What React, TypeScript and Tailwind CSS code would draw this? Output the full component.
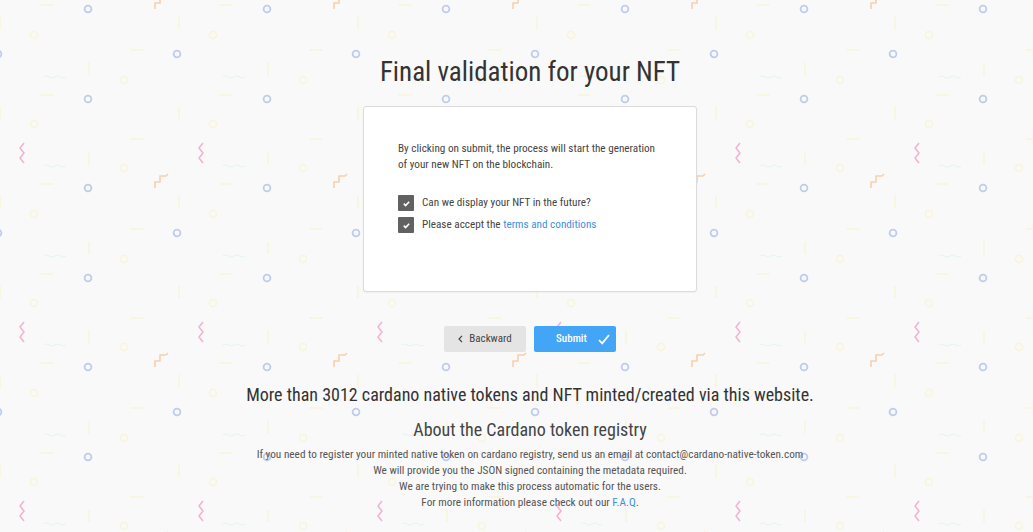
import React from 'react';

// Confetti-like tile used behind the whole page
function PatternBackground() {
  return (
    <svg className="pointer-events-none absolute inset-0 h-full w-full" aria-hidden="true">
      <defs>
        <pattern id="confetti" width="179" height="179" patternUnits="userSpaceOnUse">
          {/* blue rings */}
          <g fill="none" stroke="#bfcbef" strokeWidth="1.8">
            <circle cx="88" cy="9" r="3.4" />
            <circle cx="88" cy="99" r="3.4" />
            <circle cx="88" cy="188" r="3.4" />
            <circle cx="177" cy="54" r="3.4" />
            <circle cx="-2" cy="54" r="3.4" />
          </g>
          {/* faint yellow rings and dashes */}
          <g fill="none" stroke="#f8f5dc" strokeWidth="1.6" strokeLinecap="round">
            <circle cx="34" cy="35" r="3.6" />
            <circle cx="124" cy="80" r="3.6" />
            <circle cx="34" cy="124" r="3.6" />
            <circle cx="124" cy="168" r="3.6" />
            <path d="M41 5h12M131 50h12M41 95h12M131 139h12" />
            <path d="M0 17v12M179 17v12M89 63v12M0 107v12M179 107v12M89 152v12" />
          </g>
          {/* teal squiggles */}
          <g fill="none" stroke="#e4f4f4" strokeWidth="1.2">
            <path d="M44 77q2.75 -2 5.5 0t5.5 0t5.5 0t5.5 0" />
            <path d="M44 166q2.75 -2 5.5 0t5.5 0t5.5 0t5.5 0" />
          </g>
          {/* pink zigzag */}
          <path d="M24 143l-4 5l4 5l-4 5l4 5" fill="none" stroke="#f2b3d5" strokeWidth="1.6" strokeLinejoin="round" />
          {/* orange steps */}
          <g fill="none" stroke="#f8d0ae" strokeWidth="1.6">
            <path d="M155 188v-6h5v-6h6l2-2" />
            <path d="M155 9v-6h5v-6h6l2-2" />
          </g>
        </pattern>
      </defs>
      <rect width="100%" height="100%" fill="url(#confetti)" />
    </svg>
  );
}

function Checkbox({ children }: { children: React.ReactNode }) {
  return (
    <label className="flex items-center gap-2 text-[11.2px] leading-4 text-[#444]">
      <span className="flex h-4 w-4 items-center justify-center rounded-[1px] bg-[#616161]">
        <svg width="9" height="9" viewBox="0 0 10 10" fill="none" stroke="#fff" strokeWidth="1.8">
          <path d="M2 5.2l2 2l4-4.2" />
        </svg>
      </span>
      <span>{children}</span>
    </label>
  );
}

export default function App() {
  return (
    <div className="relative min-h-screen overflow-hidden bg-[#f9f9f9] font-['Roboto_Condensed',Roboto,sans-serif]">
      <PatternBackground />

      <div className="relative flex flex-col items-center pl-[27px] pt-[54px]">
        <h1 className="text-[27px] leading-9 font-normal text-[#333]">Final validation for your NFT</h1>

        {/* Validation card */}
        <div className="mt-4 h-[186px] w-[334px] rounded-[3px] border border-[#dcdcdc] bg-white pl-[34px] pt-[34px] shadow-[0_1px_2px_rgba(0,0,0,0.04)]">
          <p className="text-[11.2px] leading-4 text-[#444]">
            By clicking on submit, the process will start the generation
            <br />
            of your new NFT on the blockchain.
          </p>
          <div className="mt-[22px] flex flex-col gap-[6px]">
            <Checkbox>Can we display your NFT in the future?</Checkbox>
            <Checkbox>
              Please accept the <a className="text-[#3f8fdc]">terms and conditions</a>
            </Checkbox>
          </div>
        </div>

        {/* Actions */}
        <div className="mt-[34px] flex gap-2">
          <button className="flex h-[26px] w-[82px] items-center justify-center gap-[6px] rounded-[2px] bg-[#e4e4e4] text-[11px] text-[#444]">
            <svg width="5" height="8" viewBox="0 0 5 8" fill="none" stroke="#444" strokeWidth="1.2">
              <path d="M4 0.8L1 4l3 3.2" />
            </svg>
            Backward
          </button>
          <button className="flex h-[26px] w-[82px] items-center gap-[11px] rounded-[2px] bg-[#42a5f5] pl-[22px] text-[11px] font-medium text-white">
            Submit
            <svg width="12" height="11" viewBox="0 0 12 11" fill="none" stroke="#fff" strokeWidth="1.8">
              <path d="M1 6l3.2 3.4L11 1" />
            </svg>
          </button>
        </div>

        <p className="mt-[29px] text-[18px] leading-7 text-[#333]">
          More than 3012 cardano native tokens and NFT minted/created via this website.
        </p>
        <h2 className="mt-2 text-[18px] leading-[26px] text-[#444]">About the Cardano token registry</h2>
        <div className="mt-1 text-center text-[11.25px] leading-4 text-[#555]">
          <p>If you need to register your minted native token on cardano registry, send us an email at contact@cardano-native-token.com</p>
          <p>We will provide you the JSON signed containing the metadata required.</p>
          <p>We are trying to make this process automatic for the users.</p>
          <p>
            For more information please check out our <a className="text-[#3f8fdc]">F.A.Q</a>.
          </p>
        </div>
      </div>
    </div>
  );
}
